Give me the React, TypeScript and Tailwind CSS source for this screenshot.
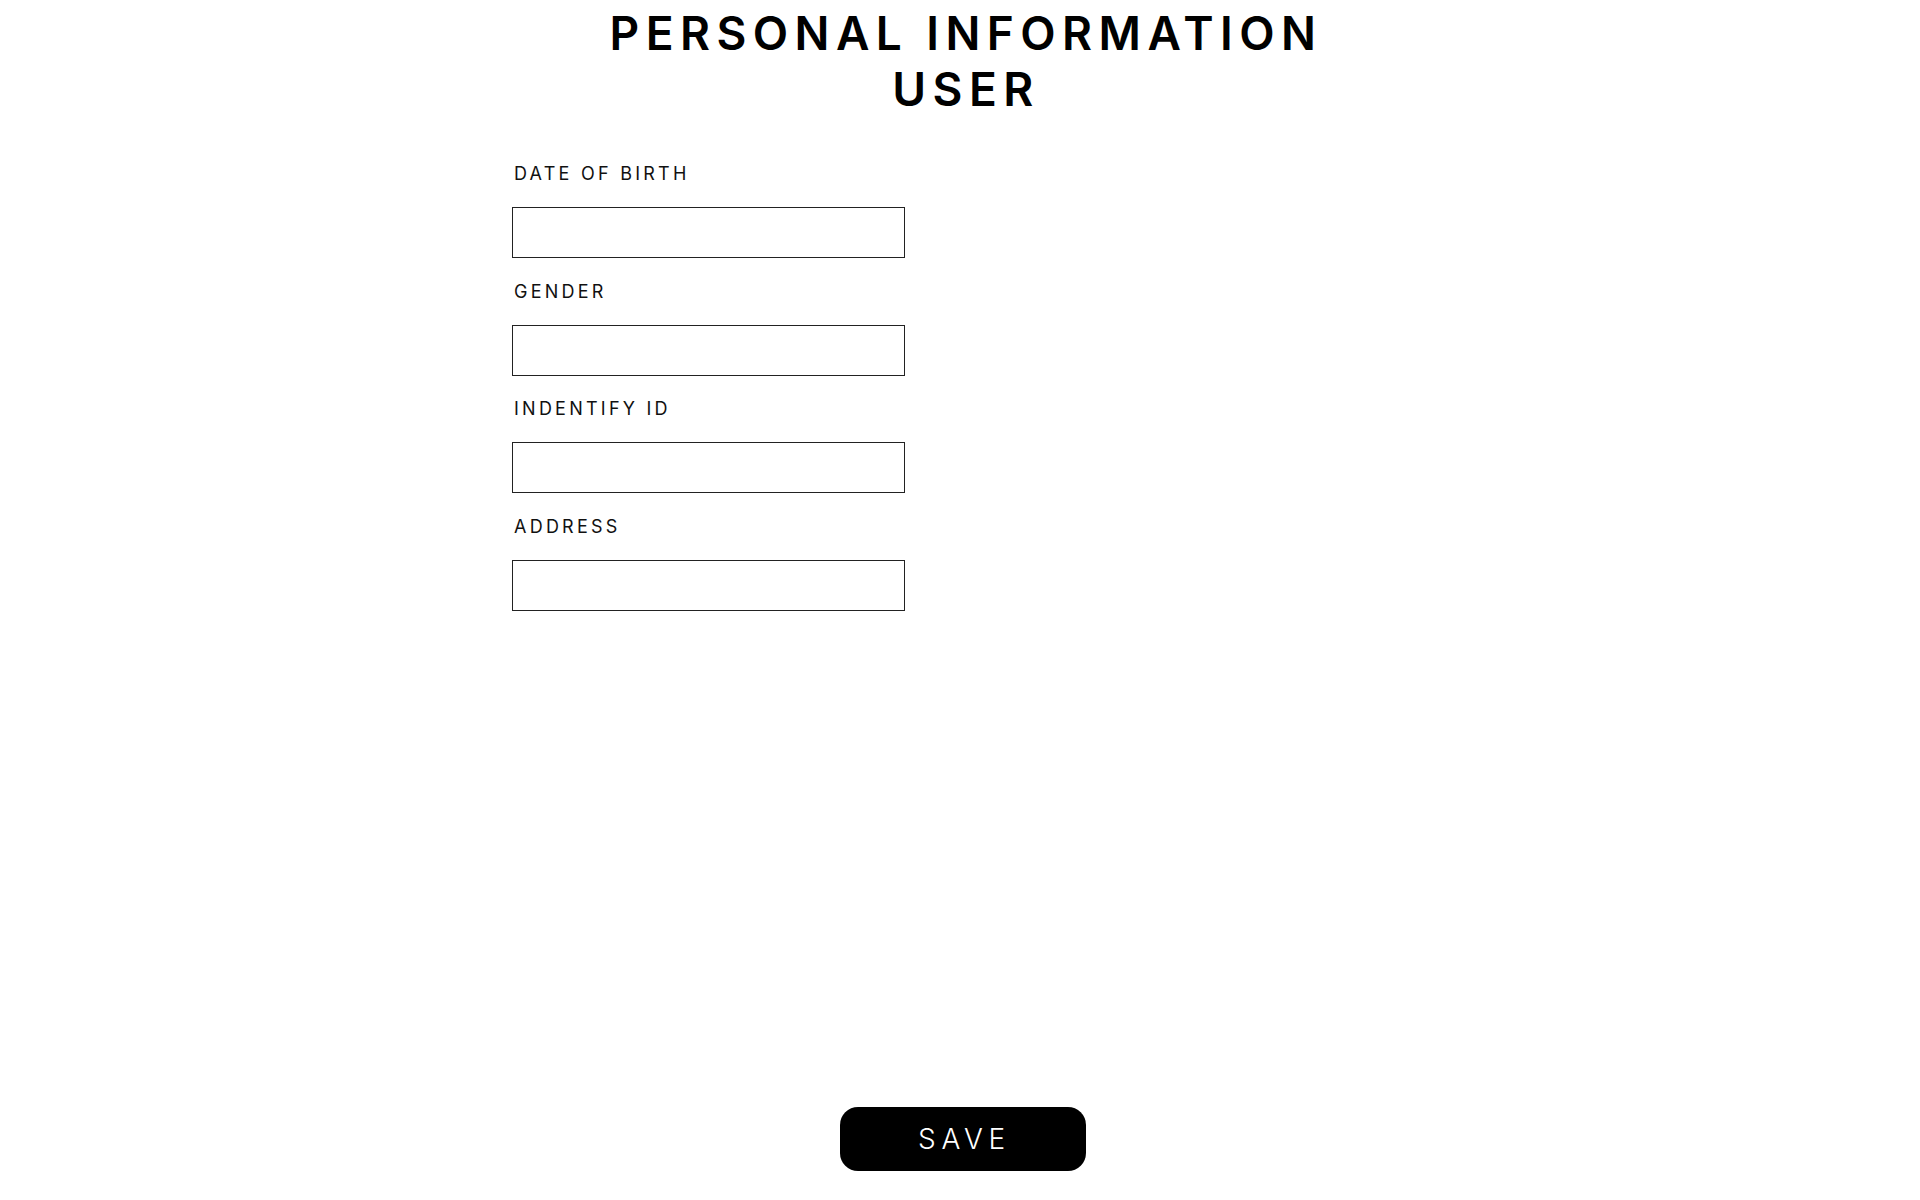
import React from "react";

const fields = ["DATE OF BIRTH", "GENDER", "INDENTIFY ID", "ADDRESS"];

export default function App() {
  return (
    <div
      className="min-h-screen w-full bg-white text-black flex flex-col"
      style={{ fontFamily: "Inter, 'Noto Sans', sans-serif" }}
    >
      <h1 className="pt-[5px] pl-[12px] text-center text-[46px] leading-[56px] font-semibold tracking-[0.14em]">
        PERSONAL INFORMATION
        <br />
        USER
      </h1>
      <div className="mt-[43px] pl-[512px] flex flex-col gap-[19.5px]">
        {fields.map((f) => (
          <div key={f} className="flex flex-col">
            <label className="pl-[2px] text-[18px] leading-[28px] tracking-[0.18em] text-[#111]">
              {f}
            </label>
            <input
              type="text"
              className="mt-[19px] w-[393px] h-[51px] border border-[#222] bg-white outline-none"
            />
          </div>
        ))}
      </div>
      <div className="mt-auto pb-[29px] flex justify-center pl-[6px]">
        <button className="w-[246px] h-[64px] rounded-[18px] bg-black text-white text-[28px] font-light tracking-[0.2em] pl-[0.1em]">
          SAVE
        </button>
      </div>
    </div>
  );
}
